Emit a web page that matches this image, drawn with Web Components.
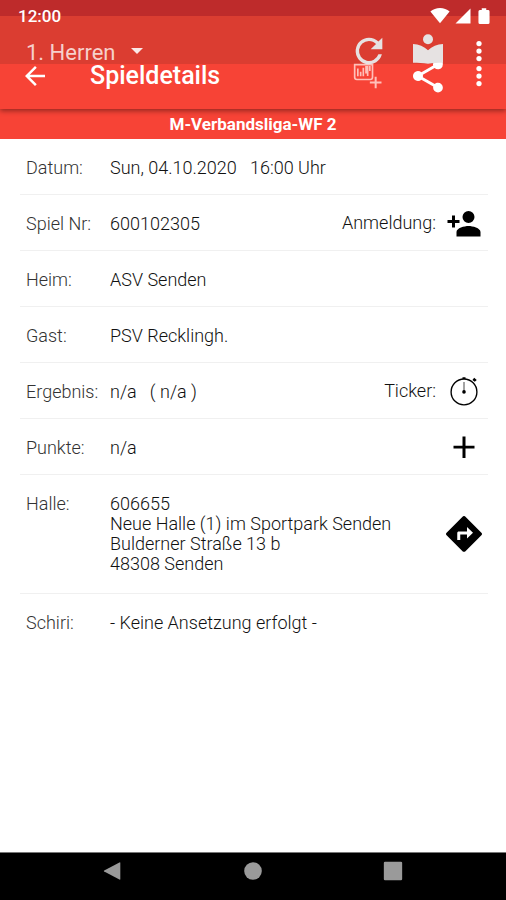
<!DOCTYPE html>
<html lang="de">
<head>
<meta charset="utf-8">
<meta name="viewport" content="width=device-width, initial-scale=1">
<title>Spieldetails</title>
<style>
  body { margin: 0; background: #fff; color: #2c2c2c; font-family: Roboto, "Liberation Sans", sans-serif; font-size: 17px; line-height: 20px; }
</style>
</head>
<body>
<match-app></match-app>
<script>
const ICONS = {
  back: '<path d="M20 11H7.8l5.6-5.6L12 4l-8 8 8 8 1.4-1.4L7.8 13H20z"/>',
  refresh: '<path d="M17.65 6.35A7.96 7.96 0 0 0 12 4a8 8 0 1 0 7.73 10h-2.08A6 6 0 1 1 12 6c1.66 0 3.14.69 4.22 1.78L13 11h7V4z"/>',
  library: '<path d="M12 11.5C9.6 9.3 6.5 8 3 7.800V19c3 0 6 .1 9 .7 3-.6 6-.7 9-.7V7.800c-3.500.2-6.600 1.500-9 3.700z"/><circle cx="12" cy="5" r="3"/>',
  share: '<path d="M18 16.08c-.76 0-1.44.3-1.96.77L8.91 12.7a3.3 3.3 0 0 0 0-1.39l7.05-4.11A3 3 0 1 0 15 5c0 .24.04.47.09.7L8.04 9.81a3 3 0 1 0 0 4.38l7.12 4.16c-.05.21-.08.43-.08.65a2.92 2.92 0 1 0 2.92-2.92z"/>',
  more: '<circle cx="12" cy="6" r="2.1"/><circle cx="12" cy="12" r="2.1"/><circle cx="12" cy="18" r="2.1"/>',
  chart: '<g fill="none" stroke="currentColor" stroke-width="1"><path d="M3.4 5.2v7.6q0 1.3 1.3 1.3h8.1q1.3 0 1.3-1.3V5.2z"/><path d="M5.3 12.200V7.500M7 12.200V9.500M8.600 12.200V7M10.200 10.500V6M11.200 12V6M12.500 9V6"/><path d="M16 12.4v7M12.5 15.9h7" stroke-width="1.2"/></g>',
  person: '<path d="M15 12a4 4 0 1 0 0-8 4 4 0 0 0 0 8zM6 10V7H4v3H1v2h3v3h2v-3h3v-2zM15 14c-2.67 0-8 1.34-8 4v3h16v-3c0-2.66-5.33-4-8-4z"/>',
  timer: '<circle cx="12" cy="12.6" r="8.6" fill="none" stroke="currentColor" stroke-width=".9"/><path d="M11 2.9h2v1.1h-2zM17.6 4.6l1.2-1.5 1.7 1.5-1.3 1.3z"/><path d="M12 6v6" stroke="#777" stroke-width=".9"/><circle cx="12" cy="12.6" r="1.2"/>',
  plus: '<path d="M19 13h-6v6.3h-2V13H5v-1.8h6V5h2v6.2h6z"/>',
  directions: '<path d="M23.6 11.2 12.8.4a1.1 1.1 0 0 0-1.6 0L.4 11.2a1.1 1.1 0 0 0 0 1.6l10.8 10.8c.4.4 1.2.4 1.6 0l10.8-10.8a1.1 1.1 0 0 0 0-1.6zM14 15v-2.7H9.5V16h-2v-4.7c0-.6.4-1 1-1H14V7.3l4 3.9z"/>',
  wifi: '<path d="M1.5 7.2C4.4 4.8 8 3.4 12 3.4s7.6 1.4 10.5 3.8L12 20z"/>',
  signal: '<path d="M22 2v20H2z"/>',
  battery: '<path d="M18 4h-3V1.5H9V4H6.5Q4.6 4 4.6 6v14.5q0 2 2 2h10.800q2 0 2-2V6q0-2-1.400-2z"/>',
  navback: '<path d="M20 3.2v17.6q0 1-1 .5L2.4 12.6q-1-.6 0-1.2L19 2.7q1-.5 1 .5z"/>',
  navhome: '<circle cx="12" cy="12" r="9.6"/>',
  navrecent: '<rect x="2" y="2" width="20" height="20" rx="1.4"/>'
};

function define(name, markup, fill) {
  const template = document.createElement('template');
  template.innerHTML = markup;
  customElements.define(name, class extends HTMLElement {
    constructor() {
      super();
      this.attachShadow({ mode: 'open' }).append(template.content.cloneNode(true));
    }
    connectedCallback() { if (fill) fill(this, this.shadowRoot); }
  });
}

define('app-icon', `
  <style>:host{display:block;width:var(--size,40px);height:var(--size,40px);flex:none}svg{display:block;width:100%;height:100%;fill:currentColor}</style>
  <svg viewBox="0 0 24 24" aria-hidden="true"></svg>`,
  (el, root) => { root.querySelector('svg').innerHTML = ICONS[el.getAttribute('name')]; });

define('icon-button', `
  <style>
    :host{display:block;flex:none}
    button{display:block;margin:0;padding:0;border:0;background:none;color:inherit;cursor:pointer}
  </style>
  <button type="button"></button>`,
  (el, root) => {
    const button = root.querySelector('button');
    button.setAttribute('aria-label', el.getAttribute('label'));
    button.innerHTML = `<app-icon name="${el.getAttribute('name')}"></app-icon>`;
  });

define('status-bar', `
  <style>
    :host{display:flex;align-items:center;height:32px;padding:0 13px 0 18px;color:#fff;font-weight:500}
    time{flex:1}
    .icons{display:flex;align-items:center;gap:3px;--size:18px}
    .icons :first-child{--size:22px}
  </style>
  <time>12:00</time>
  <div class="icons"><app-icon name="wifi"></app-icon><app-icon name="signal"></app-icon><app-icon name="battery"></app-icon></div>`);

define('tool-bar', `
  <style>
    :host{display:flex;align-items:center;height:40px;padding:0 12px 0 20px}
    .start{flex:1;display:flex;align-items:center;min-width:0}
    .actions{display:flex;align-items:center;gap:19px}
    ::slotted([name=more]){--size:30px;margin-left:-3px}
  </style>
  <div class="start"><slot></slot></div>
  <div class="actions"><slot name="actions"></slot></div>`);

define('team-picker', `
  <style>
    :host{display:flex;align-items:center;gap:15px;padding-left:6px;color:#f6d0cc}
    select{appearance:none;field-sizing:content;margin:0;padding:3px 0 0;border:0;background:none;color:inherit;font:400 22px/28px Roboto,sans-serif}
    i{border:6px solid transparent;border-top-color:#fbe9e7;border-bottom:0}
  </style>
  <select aria-label="Mannschaft"><option>1. Herren</option></select><i></i>`);

define('app-header', `
  <style>
    :host{display:block;position:relative;z-index:1;color:#fff;background:linear-gradient(#be2b2b 0 16px,#db3d31 16px 64px,#f74336 64px);box-shadow:0 2px 5px #0006}
    .main{margin:0;padding-top:24px;padding-bottom:13px}
    .under{position:absolute;inset:31px 0 auto;color:#e6e2e2}
    h1{margin:0 0 0 40px;font-size:25px;line-height:32px;font-weight:500}
    .back{--size:30px}
  </style>
  <status-bar></status-bar>
  <tool-bar class="main">
    <icon-button class="back" name="back" label="Zurück"></icon-button>
    <h1>Spieldetails</h1>
    <icon-button slot="actions" name="chart" label="Statistik hinzufügen" style="color:#ffc0b9"></icon-button>
    <icon-button slot="actions" name="share" label="Teilen"></icon-button>
    <icon-button slot="actions" name="more" label="Mehr"></icon-button>
  </tool-bar>
  <tool-bar class="under">
    <team-picker></team-picker>
    <icon-button slot="actions" name="refresh" label="Aktualisieren"></icon-button>
    <icon-button slot="actions" name="library" label="Spielregeln"></icon-button>
    <icon-button slot="actions" name="more" label="Menü" style="color:#fff"></icon-button>
  </tool-bar>`);

define('league-bar', `
  <style>:host{display:block;padding:5px 0;background:#f74336;color:#fff;text-align:center;font-weight:700;font-size:17px}h2{margin:0;font:inherit}</style>
  <h2><slot></slot></h2>`);

define('detail-row', `
  <style>
    :host{display:flex;margin:0 18px 0 20px;padding:0 6px;border-bottom:1px solid #f0f0f0;color:#111;font-size:18px}
    :host(:last-of-type){border-bottom:0}
    .label{flex:none;width:84px;padding:19px 0 16px;color:#333}
    .value{flex:1;min-width:0;padding:19px 0 var(--end,16px)}
    .side{align-self:center;display:flex;align-items:center;gap:10px;--size:36px}
    ::slotted(icon-button){color:#000}
  </style>
  <div class="label"></div><div class="value"><slot></slot></div><div class="side"><slot name="side"></slot></div>`,
  (el, root) => { root.querySelector('.label').textContent = el.getAttribute('label'); });

define('nav-bar', `
  <style>
    :host{display:block;background:#000;color:#9a9a9a;border-top:1px solid #777}
    nav{display:flex;justify-content:center;gap:118px;align-items:center;padding:7px 0 18px;--size:22px}
  </style>
  <nav aria-label="System">
    <icon-button name="navback" label="Zurück"></icon-button>
    <icon-button name="navhome" label="Start"></icon-button>
    <icon-button name="navrecent" label="Übersicht"></icon-button>
  </nav>`);

define('match-app', `
  <style>
    :host{display:flex;flex-direction:column;min-height:100vh;font-weight:300}
    main{flex:1}
    .hall{--end:19px}
  </style>
  <app-header></app-header>
  <main>
    <league-bar>M-Verbandsliga-WF 2</league-bar>
    <detail-row label="Datum:">Sun, 04.10.2020 &nbsp; 16:00 Uhr</detail-row>
    <detail-row label="Spiel Nr:">600102305<span slot="side">Anmeldung:</span><icon-button slot="side" name="person" label="Anmeldung"></icon-button></detail-row>
    <detail-row label="Heim:">ASV Senden</detail-row>
    <detail-row label="Gast:">PSV Recklingh.</detail-row>
    <detail-row label="Ergebnis:">n/a &nbsp; ( n/a )<span slot="side">Ticker:</span><icon-button slot="side" name="timer" label="Ticker"></icon-button></detail-row>
    <detail-row label="Punkte:">n/a<icon-button slot="side" name="plus" label="Punkte hinzufügen"></icon-button></detail-row>
    <detail-row class="hall" label="Halle:">606655<br>Neue Halle (1) im Sportpark Senden<br>Bulderner Straße 13 b<br>48308 Senden<icon-button slot="side" name="directions" label="Route"></icon-button></detail-row>
    <detail-row label="Schiri:">- Keine Ansetzung erfolgt -</detail-row>
  </main>
  <nav-bar></nav-bar>`);
</script>
</body>
</html>
